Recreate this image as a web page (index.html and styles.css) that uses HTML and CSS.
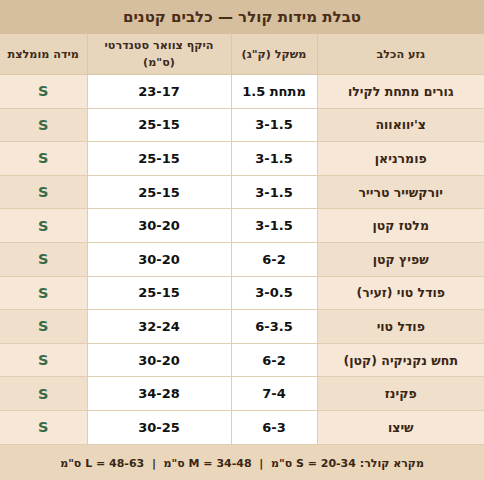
FILE: index.html
```html
<!DOCTYPE html>
<html lang="he" dir="rtl">
<head>
<meta charset="utf-8">
<link rel="stylesheet" href="styles.css">
</head>
<body>
<div class="chart">
  <div class="title">טבלת מידות קולר — כלבים קטנים</div>
  <table class="grid">
    <colgroup>
      <col class="c-breed"><col class="c-weight"><col class="c-neck"><col class="c-size">
    </colgroup>
    <thead>
      <tr>
        <th>גזע הכלב</th>
        <th>משקל (ק"ג)</th>
        <th>היקף צוואר סטנדרטי<br>(ס"מ)</th>
        <th>מידה מומלצת</th>
      </tr>
    </thead>
    <tbody>
      <tr><td class="breed">גורים מתחת לקילו</td><td class="num">מתחת 1.5</td><td class="num">23-17</td><td class="size">S</td></tr>
      <tr><td class="breed">צ'יוואווה</td><td class="num">3-1.5</td><td class="num">25-15</td><td class="size">S</td></tr>
      <tr><td class="breed">פומרניאן</td><td class="num">3-1.5</td><td class="num">25-15</td><td class="size">S</td></tr>
      <tr><td class="breed">יורקשייר טרייר</td><td class="num">3-1.5</td><td class="num">25-15</td><td class="size">S</td></tr>
      <tr><td class="breed">מלטז קטן</td><td class="num">3-1.5</td><td class="num">30-20</td><td class="size">S</td></tr>
      <tr><td class="breed">שפיץ קטן</td><td class="num">6-2</td><td class="num">30-20</td><td class="size">S</td></tr>
      <tr><td class="breed">פודל טוי (זעיר)</td><td class="num">3-0.5</td><td class="num">25-15</td><td class="size">S</td></tr>
      <tr><td class="breed">פודל טוי</td><td class="num">6-3.5</td><td class="num">32-24</td><td class="size">S</td></tr>
      <tr><td class="breed">תחש נקניקיה (קטן)</td><td class="num">6-2</td><td class="num">30-20</td><td class="size">S</td></tr>
      <tr><td class="breed">פקינז</td><td class="num">7-4</td><td class="num">34-28</td><td class="size">S</td></tr>
      <tr><td class="breed">שיצו</td><td class="num">6-3</td><td class="num">30-25</td><td class="size">S</td></tr>
    </tbody>
  </table>
  <div class="legend">מקרא קולר: S = 20-34 ס"מ &nbsp;|&nbsp; M = 34-48 ס"מ &nbsp;|&nbsp; L = 48-63 ס"מ</div>
</div>
</body>
</html>
```

FILE: styles.css
```css
html, body {
  margin: 0;
  padding: 0;
  background: #ffffff;
}
body {
  font-family: "DejaVu Sans", "Noto Sans", sans-serif;
  width: 484px;
  height: 480px;
  overflow: hidden;
}
.chart {
  display: flex;
  flex-direction: column;
  width: 484px;
}
.title {
  height: 34px;
  background: #d6bf9f;
  color: #4a2d17;
  font-weight: bold;
  font-size: 15px;
  display: flex;
  align-items: center;
  justify-content: center;
}
.grid {
  width: 484px;
  border-collapse: collapse;
  table-layout: fixed;
}
.c-breed { width: 167px; }
.c-weight { width: 86px; }
.c-neck { width: 144px; }
.c-size { width: 87px; }
.grid th {
  height: 40px;
  padding: 0 2px;
  background: #e8d6bc;
  color: #3d2a1a;
  font-size: 11.2px;
  font-weight: bold;
  line-height: 17px;
  text-align: center;
  border: 1px solid #dcc6a6;
  border-top: none;
}
.grid td {
  height: 32.6px;
  padding: 0;
  text-align: center;
  border: 1px solid #e0ceb2;
}
.grid tr > :first-child { border-right: none; }
.grid tr > :last-child { border-left: none; }
.breed {
  font-size: 12.5px;
  font-weight: bold;
  color: #3a2614;
}
.num {
  background: #ffffff;
  font-size: 13px;
  font-weight: bold;
  color: #111111;
}
.size {
  font-size: 14.5px;
  font-weight: bold;
  color: #3b6b46;
}
tbody tr:nth-child(odd) .breed,
tbody tr:nth-child(odd) .size { background: #f6e7d6; }
tbody tr:nth-child(even) .breed,
tbody tr:nth-child(even) .size { background: #f0dfca; }
.legend {
  height: 37px;
  background: #e9d6bb;
  color: #3a2614;
  font-size: 11px;
  font-weight: bold;
  display: flex;
  align-items: center;
  justify-content: center;
}
```
